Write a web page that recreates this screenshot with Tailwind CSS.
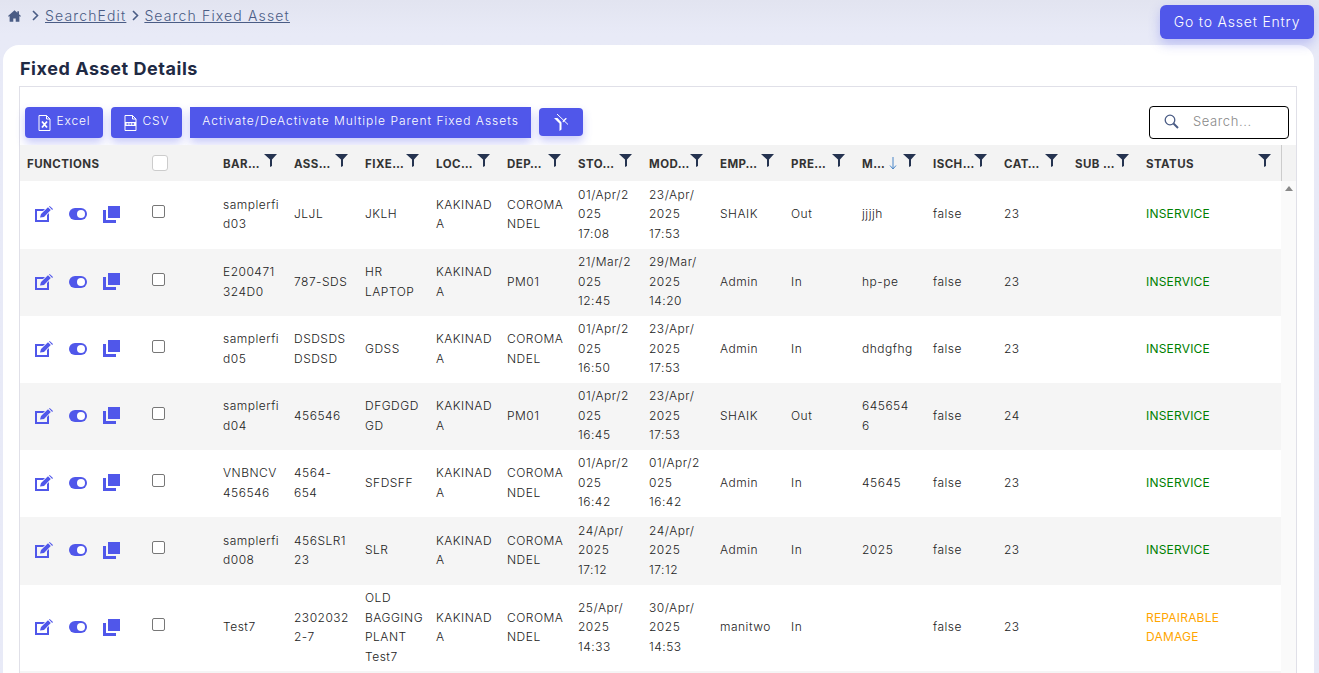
<!DOCTYPE html>
<html lang="en">
<head>
    <meta charset="UTF-8">
    <meta name="viewport" content="width=device-width, initial-scale=1.0">
    <title>Search Fixed Asset</title>
    <script src="https://cdn.jsdelivr.net/npm/@tailwindcss/browser@4"></script>
</head>
<body class="h-[673px] overflow-hidden bg-gradient-to-b from-[#e2e4f0] from-0% to-[#e8eaf7] to-[5%] font-['Inter',sans-serif] font-light text-[#222]">

    <!-- top bar -->
    <div class="flex h-[45px] justify-between pr-[5px]">
        <div class="flex h-[31px] items-center pl-[8px] text-[14px] tracking-[1.15px] text-[#4a5c85]">
            <svg class="w-[13px] h-[12px] mr-[11px] fill-current" viewBox="0 0 16 14"><path d="M8 0 0 7l1 1 1-.9V14h4.500v-4h3v4H14V7.100l1 .9 1-1-2.500-2.200V1h-2v2.100z"/></svg>
            <svg class="w-[7px] h-[11px] mr-[6px] fill-none stroke-current stroke-[1.6]" viewBox="0 0 7 11"><path d="m1 1 4.500 4.500L1 10"/></svg>
            <a href="#" class="underline">SearchEdit</a>
            <svg class="w-[7px] h-[11px] ml-[6px] mr-[5px] fill-none stroke-current stroke-[1.6]" viewBox="0 0 7 11"><path d="m1 1 4.500 4.500L1 10"/></svg>
            <a href="#" class="underline">Search Fixed Asset</a>
        </div>
        <button class="mt-[5px] h-[34px] w-[154px] rounded-[6px] bg-[#5057ea] pb-[2px] text-[14px] tracking-[0.8px] text-white shadow-[0_5px_12px_rgba(80,87,234,0.3)]">Go to Asset Entry</button>
    </div>

    <!-- card -->
    <div class="ml-[3px] mr-[5px] h-[628px] overflow-hidden rounded-t-[16px] bg-white pl-[16px] pr-[17px]">
        <h1 class="h-[41px] pl-[1px] pt-[12px] text-[18px] leading-[24px] font-bold tracking-[0.55px] text-[#1f2a44]">Fixed Asset Details</h1>

        <div class="border border-[#e0e0e8]">
            <!-- toolbar -->
            <div class="flex h-[58px] pl-[5px] pr-[7px] pt-[20px] gap-[8px] text-[12px] tracking-[0.85px] text-white">
                <button class="flex h-[31px] w-[78px] items-center justify-center gap-[6px] rounded-[4px] bg-[#5057ea] shadow-[0_5px_10px_rgba(80,87,234,0.3)]">
                    <svg class="w-[13px] h-[16px] fill-none stroke-white" viewBox="0 0 13 16"><path d="M1 .5h7.500l3.500 3.500v11.500H1zM8.500.5V4H12"/><path d="m4 6.500 5 6m0-6-5 6" stroke-width="1.800"/></svg>
                    <span class="pb-[3px]">Excel</span>
                </button>
                <button class="flex h-[31px] w-[71px] items-center justify-center gap-[6px] rounded-[4px] bg-[#5057ea] shadow-[0_5px_10px_rgba(80,87,234,0.3)]">
                    <svg class="w-[13px] h-[16px] fill-none stroke-white" viewBox="0 0 13 16"><path d="M1 .5h7.500l3.500 3.500v11.500H1zM8.500.5V4H12"/><rect x="1" y="7" width="11" height="4" fill="#fff" stroke="none"/><path d="M2.500 9h8" stroke="#5057ea" stroke-width="1.500" stroke-dasharray="2 .8"/></svg>
                    <span class="pb-[3px]">CSV</span>
                </button>
                <button class="h-[31px] w-[341px] bg-[#5057ea] pb-[3px] tracking-[0.98px] shadow-[0_5px_10px_rgba(80,87,234,0.3)]">Activate/DeActivate Multiple Parent Fixed Assets</button>
                <button class="mt-[1px] flex h-[28px] w-[44px] items-center justify-center rounded-[4px] bg-[#5057ea] shadow-[0_5px_10px_rgba(80,87,234,0.3)]">
                    <svg class="w-[15px] h-[17px] fill-white" viewBox="0 0 15 17"><path d="M0 4h3.500l4 4.500v7l-2 1.500V9.500zM8.500 7l3-3h1v1L9 8.500z"/><path d="m3 0 11 10.500" stroke="#fff" fill="none"/></svg>
                </button>
                <div class="ml-auto -mt-[1px] flex h-[33px] w-[140px] items-center rounded-[4px] border border-black pb-[2px] pl-[14px] text-[#888]">
                    <svg class="w-[15px] h-[15px] mr-[14px] fill-none stroke-[#4a5c85] stroke-[1.300]" viewBox="0 0 15 15"><circle cx="6" cy="6" r="4.800"/><path d="m9.500 9.500 4.500 4.500" stroke-width="2"/></svg>
                    <span class="text-[13px] tracking-[0.6px]">Search...</span>
                </div>
            </div>

            <div class="flex">
                <table class="w-[1261px] table-fixed text-[12px] leading-[19.500px] tracking-[0.5px]">
                    <colgroup>
                        <col class="w-[126px]"><col class="w-[71px]"><col class="w-[71px]"><col class="w-[71px]"><col class="w-[71px]">
                        <col class="w-[71px]"><col class="w-[71px]"><col class="w-[71px]"><col class="w-[71px]"><col class="w-[71px]">
                        <col class="w-[71px]"><col class="w-[71px]"><col class="w-[71px]"><col class="w-[71px]"><col class="w-[71px]"><col>
                    </colgroup>
                    <thead>
                        <tr id="head" class="h-[36px] bg-[#f3f3f3] text-left"></tr>
                    </thead>
                    <tbody id="rows"></tbody>
                </table>
                <!-- scrollbar -->
                <div class="w-[15px] bg-[#fafafa]">
                    <div class="h-[36px] border-l border-[#ccc] bg-[#f3f3f3]"></div>
                    <div class="mx-auto mt-[5px] h-0 w-0 border-x-[4px] border-b-[5px] border-x-transparent border-b-[#888]"></div>
                </div>
            </div>
        </div>
    </div>

    <script>
        const funnel = '<svg class="absolute top-[9px] right-[11px] w-[13px] h-[13px] fill-[#253350]" viewBox="0 0 13 13"><path d="M0 0h13L8 5.500V12l-2 1V5.500z"/></svg>';
        const statusFunnel = '<svg class="absolute top-[9px] right-[10px] w-[13px] h-[13px] fill-[#253350]" viewBox="0 0 13 13"><path d="M0 0h13L8 5.500V12l-2 1V5.500z"/></svg>';
        const sortArrow = '<svg class="absolute top-[12px] right-[30px] w-[8px] h-[13px] fill-none stroke-[#4a86c8]" viewBox="0 0 8 13"><path d="M4 0v12M1 8.500 4 12l3-3.500"/></svg>';

        const headers = ['BAR…', 'ASS…', 'FIXE…', 'LOC…', 'DEP…', 'STO…', 'MOD…', 'EMP…', 'PRE…', 'M…', 'ISCH…', 'CAT…', 'SUB …', 'STATUS'];

        const rows = [
            ['samplerfi<br>d03', 'JLJL', 'JKLH', 'KAKINAD<br>A', 'COROMA<br>NDEL', '01/Apr/2<br>025<br>17:08', '23/Apr/<br>2025<br>17:53', 'SHAIK', 'Out', 'jjjjh', 'false', '23', '', 'INSERVICE'],
            ['E200471<br>324D0', '787-SDS', 'HR<br>LAPTOP', 'KAKINAD<br>A', 'PM01', '21/Mar/2<br>025<br>12:45', '29/Mar/<br>2025<br>14:20', 'Admin', 'In', 'hp-pe', 'false', '23', '', 'INSERVICE'],
            ['samplerfi<br>d05', 'DSDSDS<br>DSDSD', 'GDSS', 'KAKINAD<br>A', 'COROMA<br>NDEL', '01/Apr/2<br>025<br>16:50', '23/Apr/<br>2025<br>17:53', 'Admin', 'In', 'dhdgfhg', 'false', '23', '', 'INSERVICE'],
            ['samplerfi<br>d04', '456546', 'DFGDGD<br>GD', 'KAKINAD<br>A', 'PM01', '01/Apr/2<br>025<br>16:45', '23/Apr/<br>2025<br>17:53', 'SHAIK', 'Out', '645654<br>6', 'false', '24', '', 'INSERVICE'],
            ['VNBNCV<br>456546', '4564-<br>654', 'SFDSFF', 'KAKINAD<br>A', 'COROMA<br>NDEL', '01/Apr/2<br>025<br>16:42', '01/Apr/2<br>025<br>16:42', 'Admin', 'In', '45645', 'false', '23', '', 'INSERVICE'],
            ['samplerfi<br>d008', '456SLR1<br>23', 'SLR', 'KAKINAD<br>A', 'COROMA<br>NDEL', '24/Apr/<br>2025<br>17:12', '24/Apr/<br>2025<br>17:12', 'Admin', 'In', '2025', 'false', '23', '', 'INSERVICE'],
            ['Test7', '2302032<br>2-7', 'OLD<br>BAGGING<br>PLANT<br>Test7', 'KAKINAD<br>A', 'COROMA<br>NDEL', '25/Apr/<br>2025<br>14:33', '30/Apr/<br>2025<br>14:53', 'manitwo', 'In', '', 'false', '23', '', 'REPAIRABLE<br>DAMAGE']
        ];

        const heights = ['h-[68px]', 'h-[67px]', 'h-[67px]', 'h-[67px]', 'h-[67px]', 'h-[68px]', 'h-[86px]'];

        const functionIcons = `
            <div class="flex items-center gap-[16px] pb-[2px] pl-[15px] text-[#5057ea]">
                <svg class="w-[18px] h-[16px] fill-current" viewBox="0 0 18 16"><path d="M0 3h10L8 5H2v9h10V9l2-2v9H0z"/><path d="m5 11.500 1-3.500 7-6.800 2.800 2.800L9 11zM14 .6l.7-.6L18 3l-.8.9z"/></svg>
                <svg class="w-[18px] h-[12px] fill-current" viewBox="0 0 18 12"><rect width="18" height="12" rx="6"/><circle cx="12" cy="6" r="4" fill="#fff"/></svg>
                <svg class="w-[17px] h-[17px] fill-current" viewBox="0 0 17 17"><path d="M5 0h12v12H5zM0 4h3v10h10v3H0z"/></svg>
            </div>`;

        document.getElementById('head').innerHTML =
            '<th class="px-[7px] pt-[3px] font-bold text-[11.500px] tracking-[0.45px] text-[#333]">FUNCTIONS</th>' +
            '<th class="px-[6px]"><input type="checkbox" class="block h-[16px] w-[16px] appearance-none rounded-[3px] border border-[#ccc] bg-white"></th>' +
            headers.map(h => {
                const icon = h === 'STATUS' ? statusFunnel : funnel;
                return `<th class="relative px-[6px] pt-[3px] font-bold text-[11.500px] tracking-[0.45px] text-[#333]">${h}${icon}${h === 'M…' ? sortArrow : ''}</th>`;
            }).join('');

        document.getElementById('rows').innerHTML = rows.map((row, i) => {
            const stripe = i % 2 === 1 ? 'bg-[#f5f5f5]' : 'bg-white';
            const cells = row.map((value, c) => {
                if (c === 13) {
                    const color = value === 'INSERVICE' ? 'text-[#008000]' : 'text-[#ffa500]';
                    return `<td class="px-[6px] pb-[2px] align-middle font-normal tracking-[0.2px] ${color}">${value}</td>`;
                }
                return `<td class="px-[6px] pb-[2px] align-middle">${value}</td>`;
            }).join('');
            return `<tr class="${heights[i]} ${stripe}"><td>${functionIcons}</td><td class="px-[6px]"><input type="checkbox" class="mb-[7px] block h-[13px] w-[13px] appearance-none rounded-[2px] border border-[#777] bg-white"></td>${cells}</tr>`;
        }).join('') + '<tr class="h-[67px] bg-[#f5f5f5]"><td colspan="16"></td></tr>';
    </script>
</body>
</html>
